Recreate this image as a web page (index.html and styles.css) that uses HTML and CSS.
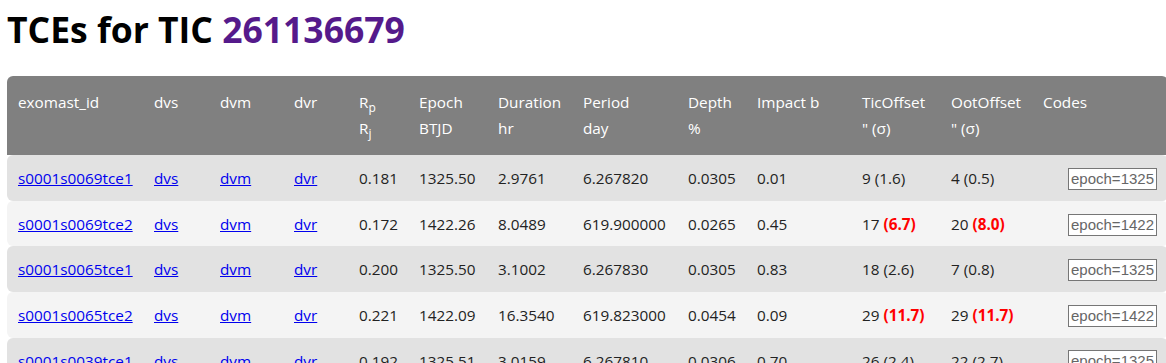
FILE: index.html
```html
<!DOCTYPE html>
<html lang="en">
<head>
<meta charset="utf-8">
<title>TCEs for TIC 261136679</title>
<link rel="stylesheet" href="styles.css">
</head>
<body>
<h1 class="title">TCEs for TIC <a class="tic" href="#">261136679</a></h1>
<table class="tces">
  <colgroup>
    <col class="c-id"><col class="c-dvs"><col class="c-dvm"><col class="c-dvr"><col class="c-rp">
    <col class="c-epoch"><col class="c-dur"><col class="c-per"><col class="c-dep"><col class="c-imp">
    <col class="c-tic"><col class="c-oot"><col class="c-codes">
  </colgroup>
  <thead>
    <tr>
      <th>exomast_id</th>
      <th>dvs</th>
      <th>dvm</th>
      <th>dvr</th>
      <th>R<sub>p</sub><br>R<sub>j</sub></th>
      <th>Epoch<br>BTJD</th>
      <th>Duration<br>hr</th>
      <th>Period<br>day</th>
      <th>Depth<br>%</th>
      <th>Impact b</th>
      <th>TicOffset<br>" (σ)</th>
      <th>OotOffset<br>" (σ)</th>
      <th>Codes</th>
    </tr>
  </thead>
  <tbody>
    <tr>
      <td><a href="#">s0001s0069tce1</a></td>
      <td><a href="#">dvs</a></td>
      <td><a href="#">dvm</a></td>
      <td><a href="#">dvr</a></td>
      <td>0.181</td>
      <td>1325.50</td>
      <td>2.9761</td>
      <td>6.267820</td>
      <td>0.0305</td>
      <td>0.01</td>
      <td>9 (1.6)</td>
      <td>4 (0.5)</td>
      <td class="codes"><span class="code">epoch=1325</span></td>
    </tr>
    <tr>
      <td><a href="#">s0001s0069tce2</a></td>
      <td><a href="#">dvs</a></td>
      <td><a href="#">dvm</a></td>
      <td><a href="#">dvr</a></td>
      <td>0.172</td>
      <td>1422.26</td>
      <td>8.0489</td>
      <td>619.900000</td>
      <td>0.0265</td>
      <td>0.45</td>
      <td>17 <b class="sig">(6.7)</b></td>
      <td>20 <b class="sig">(8.0)</b></td>
      <td class="codes"><span class="code">epoch=1422</span></td>
    </tr>
    <tr>
      <td><a href="#">s0001s0065tce1</a></td>
      <td><a href="#">dvs</a></td>
      <td><a href="#">dvm</a></td>
      <td><a href="#">dvr</a></td>
      <td>0.200</td>
      <td>1325.50</td>
      <td>3.1002</td>
      <td>6.267830</td>
      <td>0.0305</td>
      <td>0.83</td>
      <td>18 (2.6)</td>
      <td>7 (0.8)</td>
      <td class="codes"><span class="code">epoch=1325</span></td>
    </tr>
    <tr>
      <td><a href="#">s0001s0065tce2</a></td>
      <td><a href="#">dvs</a></td>
      <td><a href="#">dvm</a></td>
      <td><a href="#">dvr</a></td>
      <td>0.221</td>
      <td>1422.09</td>
      <td>16.3540</td>
      <td>619.823000</td>
      <td>0.0454</td>
      <td>0.09</td>
      <td>29 <b class="sig">(11.7)</b></td>
      <td>29 <b class="sig">(11.7)</b></td>
      <td class="codes"><span class="code">epoch=1422</span></td>
    </tr>
    <tr>
      <td><a href="#">s0001s0039tce1</a></td>
      <td><a href="#">dvs</a></td>
      <td><a href="#">dvm</a></td>
      <td><a href="#">dvr</a></td>
      <td>0.192</td>
      <td>1325.51</td>
      <td>3.0159</td>
      <td>6.267810</td>
      <td>0.0306</td>
      <td>0.70</td>
      <td>26 (2.4)</td>
      <td>22 (2.7)</td>
      <td class="codes"><span class="code">epoch=1325</span></td>
    </tr>
  </tbody>
</table>
</body>
</html>
```

FILE: styles.css
```css
html, body {
  margin: 0;
  background: #ffffff;
}
body {
  padding: 7px;
  font-family: "Open Sans", "Noto Sans", sans-serif;
  font-size: 15.3px;
  color: #222222;
  overflow: hidden;
}
.title {
  margin: 0 0 25px 0;
  font-size: 35.5px;
  line-height: 44px;
  font-weight: 700;
  color: #000000;
}
.tic {
  color: #551a8b;
  text-decoration: none;
}
.tces {
  border-collapse: separate;
  border-spacing: 0;
  table-layout: fixed;
  width: 1161px;
}
.c-id { width: 136px; }
.c-dvs { width: 66px; }
.c-dvm { width: 74px; }
.c-dvr { width: 65px; }
.c-rp { width: 60px; }
.c-epoch { width: 79px; }
.c-dur { width: 85px; }
.c-per { width: 105px; }
.c-dep { width: 69px; }
.c-imp { width: 105px; }
.c-tic { width: 89px; }
.c-oot { width: 92px; }
.c-codes { width: 136px; }
.tces th {
  background: #808080;
  color: #ffffff;
  font-weight: 400;
  text-align: left;
  vertical-align: top;
  padding: 14px 11px;
  line-height: 25.6px;
  white-space: nowrap;
}
.tces th sub {
  font-size: 12px;
  line-height: 0;
}
.tces td {
  padding: 11px 11px 9px 11px;
  line-height: 25.6px;
  white-space: nowrap;
  vertical-align: middle;
}
.tces tbody tr:nth-child(odd) td { background: #e2e2e2; }
.tces tbody tr:nth-child(even) td { background: #f4f4f4; }
.tces tr > :first-child { border-radius: 6px 0 0 6px; }
.tces thead tr > :first-child { border-radius: 6px 0 0 0; }
.tces tr > :last-child { border-radius: 0 6px 6px 0; }
.tces thead tr > :last-child { border-radius: 0 6px 0 0; }
.tces a {
  color: #0000ee;
}
.sig {
  color: #ff0000;
  font-weight: 700;
}
.codes {
  text-align: right;
}
.code {
  display: inline-block;
  vertical-align: middle;
  margin-top: -2px;
  font-family: "Liberation Sans", Arial, sans-serif;
  font-size: 15px;
  line-height: 20px;
  color: #666666;
  border: 1px solid #767676;
  padding: 0 2px;
  background: #ffffff;
}
```
